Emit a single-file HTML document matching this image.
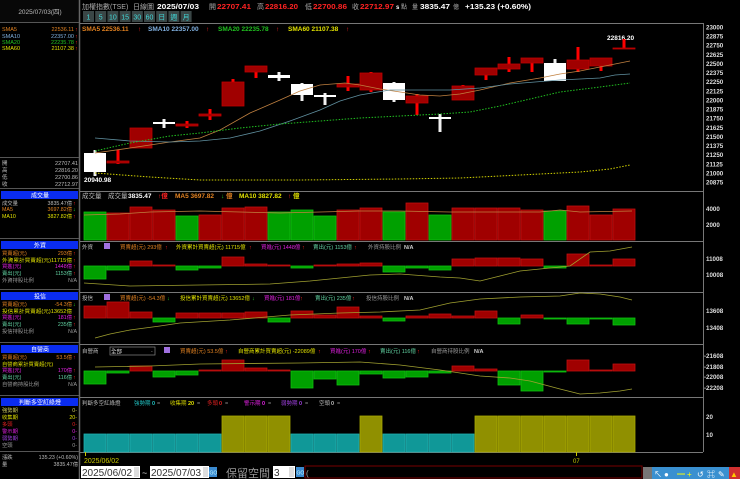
<!DOCTYPE html>
<html><head><meta charset="utf-8">
<style>
html,body{margin:0;padding:0;background:#000;width:740px;height:479px;overflow:hidden}
svg{display:block}
text{font-family:"Liberation Sans","Noto Sans CJK TC",sans-serif}
</style></head><body>
<svg id="s" width="740" height="479" viewBox="0 0 740 479" xmlns="http://www.w3.org/2000/svg">
<rect width="740" height="479" fill="#000"/>
<!-- sidebar -->
<rect x="0" y="0" width="79" height="22" fill="#080808"/>
<text x="40" y="14" font-size="6.5" fill="#bbb" text-anchor="middle">2025/07/03(四)</text>
<line x1="79.5" y1="0" x2="79.5" y2="479" stroke="#666" stroke-width="1.5"/>
<g stroke="#555" stroke-width="1">
<line x1="0" y1="22.5" x2="79" y2="22.5"/><line x1="0" y1="157.5" x2="79" y2="157.5"/>
<line x1="0" y1="188.5" x2="79" y2="188.5"/><line x1="0" y1="238.5" x2="79" y2="238.5"/>
<line x1="0" y1="289.5" x2="79" y2="289.5"/><line x1="0" y1="342.5" x2="79" y2="342.5"/>
<line x1="0" y1="395.5" x2="79" y2="395.5"/><line x1="0" y1="451.5" x2="79" y2="451.5"/>
</g>
<g font-size="5.5">
<text x="2" y="31" fill="#e08020">SMA5</text><text x="74" y="31" fill="#e08020" text-anchor="end">22536.11</text>
<text x="2" y="38" fill="#80b0e0">SMA10</text><text x="74" y="38" fill="#80b0e0" text-anchor="end">22357.00</text>
<text x="2" y="44" fill="#20c020">SMA20</text><text x="74" y="44" fill="#20c020" text-anchor="end">22235.78</text>
<text x="2" y="50" fill="#e0e000">SMA60</text><text x="74" y="50" fill="#e0e000" text-anchor="end">21107.38</text>
<g fill="#ff2020"><text x="75" y="31">↑</text><text x="75" y="38">↑</text><text x="75" y="44">↑</text><text x="75" y="50">↑</text></g>
<g fill="#bbb"><text x="2" y="165">開</text><text x="2" y="172">高</text><text x="2" y="179">低</text><text x="2" y="186">收</text></g>
<g fill="#bbb" text-anchor="end"><text x="78" y="165">22707.41</text><text x="78" y="172">22816.20</text><text x="78" y="179">22700.86</text><text x="78" y="186">22712.97</text></g>
</g>
<g fill="#0a2cf0">
<rect x="1" y="191" width="77" height="8"/><rect x="1" y="241" width="77" height="8"/>
<rect x="1" y="292" width="77" height="8"/><rect x="1" y="345" width="77" height="8"/>
<rect x="1" y="398" width="77" height="8"/>
</g>
<g font-size="6" fill="#fff" text-anchor="middle">
<text x="40" y="197.5">成交量</text><text x="40" y="247.5">外資</text><text x="40" y="298.5">投信</text><text x="40" y="351.5">自營商</text><text x="40" y="404.5">判斷多空紅綠燈</text>
</g>
<g font-size="5.3">
<text x="2" y="205" fill="#bbb">成交量</text><text x="72" y="205" fill="#bbb" text-anchor="end">3835.47億</text><text x="73" y="205" fill="#f22">↑</text>
<text x="2" y="211" fill="#e08020">MA5</text><text x="72" y="211" fill="#e08020" text-anchor="end">3697.82億</text><text x="73" y="211" fill="#2c2">↓</text>
<text x="2" y="218" fill="#e0e000">MA10</text><text x="72" y="218" fill="#e0e000" text-anchor="end">3827.82億</text><text x="73" y="218" fill="#f22">↑</text>

<text x="2" y="255" fill="#e08020">買賣超(元)</text><text x="72" y="255" fill="#e08020" text-anchor="end">293億</text><text x="73" y="255" fill="#f22">↑</text>
<text x="2" y="262" fill="#e0e000" textLength="70" lengthAdjust="spacingAndGlyphs">外資累計買賣超(元)11715億</text><text x="73" y="262" fill="#f22">↑</text>
<text x="2" y="268" fill="#e020e0">買進(元)</text><text x="72" y="268" fill="#e020e0" text-anchor="end">1448億</text><text x="73" y="268" fill="#f22">↑</text>
<text x="2" y="275" fill="#60d0a0">賣出(元)</text><text x="72" y="275" fill="#60d0a0" text-anchor="end">1153億</text><text x="73" y="275" fill="#f22">↑</text>
<text x="2" y="282" fill="#999">外資持股比例</text><text x="77" y="282" fill="#999" text-anchor="end">N/A</text>

<text x="2" y="306" fill="#e08020">買賣超(元)</text><text x="72" y="306" fill="#e08020" text-anchor="end">-54.3億</text><text x="73" y="306" fill="#2c2">↓</text>
<text x="2" y="313" fill="#e0e000" textLength="70" lengthAdjust="spacingAndGlyphs">投信累計買賣超(元)13652億</text>
<text x="2" y="319" fill="#e020e0">買進(元)</text><text x="72" y="319" fill="#e020e0" text-anchor="end">181億</text><text x="73" y="319" fill="#f22">↑</text>
<text x="2" y="326" fill="#60d0a0">賣出(元)</text><text x="72" y="326" fill="#60d0a0" text-anchor="end">235億</text><text x="73" y="326" fill="#f22">↑</text>
<text x="2" y="333" fill="#999">投信持股比例</text><text x="77" y="333" fill="#999" text-anchor="end">N/A</text>

<text x="2" y="359" fill="#e08020">買賣超(元)</text><text x="72" y="359" fill="#e08020" text-anchor="end">53.5億</text><text x="73" y="359" fill="#f22">↑</text>
<text x="2" y="366" fill="#e0e000">自營商累計買賣超(元)</text>
<text x="2" y="372" fill="#e020e0">買進(元)</text><text x="72" y="372" fill="#e020e0" text-anchor="end">170億</text><text x="73" y="372" fill="#f22">↑</text>
<text x="2" y="379" fill="#60d0a0">賣出(元)</text><text x="72" y="379" fill="#60d0a0" text-anchor="end">116億</text><text x="73" y="379" fill="#f22">↑</text>
<text x="2" y="386" fill="#999">自營商持股比例</text><text x="77" y="386" fill="#999" text-anchor="end">N/A</text>

<text x="2" y="412" fill="#d0d060">強勢期</text><text x="77" y="412" fill="#d0d060" text-anchor="end">0-</text>
<text x="2" y="419" fill="#e0e000">收集期</text><text x="77" y="419" fill="#e0e000" text-anchor="end">20-</text>
<text x="2" y="426" fill="#e02020">多頭</text><text x="77" y="426" fill="#e02020" text-anchor="end">0-</text>
<text x="2" y="433" fill="#e020e0">警示期</text><text x="77" y="433" fill="#e020e0" text-anchor="end">0-</text>
<text x="2" y="440" fill="#a040e0">弱勢期</text><text x="77" y="440" fill="#a040e0" text-anchor="end">0-</text>
<text x="2" y="447" fill="#999">空頭</text><text x="77" y="447" fill="#999" text-anchor="end">0-</text>

<text x="2" y="459" fill="#bbb">漲跌</text><text x="78" y="459" fill="#bbb" text-anchor="end">135.23 (+0.60%)</text>
<text x="2" y="466" fill="#bbb">量</text><text x="78" y="466" fill="#bbb" text-anchor="end">3835.47億</text>
</g>

<!-- header -->
<g font-size="7.5" font-weight="bold">
<text x="82" y="9" fill="#aaa" font-weight="normal" font-size="7">加權指數(TSE)</text>
<text x="133" y="9" fill="#aaa" font-weight="normal" font-size="7">日線圖</text>
<text x="157" y="9" fill="#fff" textLength="42" lengthAdjust="spacingAndGlyphs">2025/07/03</text>
<text x="209" y="9" fill="#aaa" font-weight="normal" font-size="7">開</text><text x="217" y="9" fill="#f22" textLength="34" lengthAdjust="spacingAndGlyphs">22707.41</text>
<text x="257" y="9" fill="#aaa" font-weight="normal" font-size="7">高</text><text x="265" y="9" fill="#f22" textLength="33" lengthAdjust="spacingAndGlyphs">22816.20</text>
<text x="305" y="9" fill="#aaa" font-weight="normal" font-size="7">低</text><text x="313" y="9" fill="#f22" textLength="34" lengthAdjust="spacingAndGlyphs">22700.86</text>
<text x="352" y="9" fill="#aaa" font-weight="normal" font-size="7">收</text><text x="360" y="9" fill="#f22" textLength="34" lengthAdjust="spacingAndGlyphs">22712.97</text>
<text x="396" y="9" fill="#fff" font-size="6">s</text><text x="401" y="9" fill="#aaa" font-weight="normal" font-size="6">點</text>
<text x="412" y="9" fill="#aaa" font-weight="normal" font-size="6">量</text><text x="420" y="9" fill="#fff" textLength="30" lengthAdjust="spacingAndGlyphs">3835.47</text><text x="453" y="9" fill="#aaa" font-weight="normal" font-size="6">億</text>
<text x="465" y="9" fill="#fff" textLength="66" lengthAdjust="spacingAndGlyphs">+135.23 (+0.60%)</text>
</g>
<g id="btns"></g>
<!-- panel frames -->
<g stroke="#777" stroke-width="1" fill="none">
<line x1="80" y1="23.5" x2="703" y2="23.5"/>
<line x1="703.5" y1="23" x2="703.5" y2="452"/>
<line x1="80" y1="191.5" x2="703" y2="191.5"/>
<line x1="80" y1="241.5" x2="703" y2="241.5"/>
<line x1="80" y1="292.5" x2="703" y2="292.5"/>
<line x1="80" y1="344.5" x2="703" y2="344.5"/>
<line x1="80" y1="397.5" x2="703" y2="397.5"/>
<line x1="80" y1="452.5" x2="703" y2="452.5"/>
</g>
<g id="yax" font-size="6.2" font-weight="bold" fill="#ddd">
<text x="706" y="211">4000</text><text x="706" y="227">2000</text>
<text x="706" y="261">11008</text><text x="706" y="277">10008</text>
<text x="706" y="313">13608</text><text x="706" y="330">13408</text>
<text x="704" y="358">-21608</text><text x="704" y="369">-21808</text><text x="704" y="379">-22008</text><text x="704" y="390">-22208</text>
<text x="706" y="419">20</text><text x="706" y="437">10</text>
</g>
<!-- titles -->
<g font-size="6.5" font-weight="bold">
<text x="82" y="31" fill="#e08020">SMA5 22536.11</text><text x="138" y="31" fill="#f22">↑</text>
<text x="148" y="31" fill="#80b0e0">SMA10 22357.00</text><text x="206" y="31" fill="#f22">↑</text>
<text x="218" y="31" fill="#20c020">SMA20 22235.78</text><text x="276" y="31" fill="#f22">↑</text>
<text x="288" y="31" fill="#e0e000">SMA60 21107.38</text><text x="346" y="31" fill="#f22">↑</text>
<text x="607" y="40" fill="#fff">22816.20</text>
<text x="84" y="182" fill="#fff">20940.98</text>
<text x="82" y="198" fill="#bbb" font-weight="normal">成交量</text><text x="108" y="198" fill="#bbb" font-weight="normal">成交量</text><text x="128" y="198" fill="#fff">3835.47</text><text x="158" y="198" fill="#f22">↑億</text>
<text x="175" y="198" fill="#e08020">MA5 3697.82</text><text x="221" y="198" fill="#2c2">↓</text><text x="226" y="198" fill="#e08020">億</text>
<text x="239" y="198" fill="#e0e000">MA10 3827.82</text><text x="288" y="198" fill="#f22">↑</text><text x="293" y="198" fill="#e0e000">億</text>
</g>
<g font-size="5.5">
<text x="82" y="249" fill="#bbb">外資</text><rect x="104" y="243" width="6" height="6" fill="#a070e0"/>
<text x="120" y="249" fill="#e08020">買賣超(元) 293億</text><text x="165" y="249" fill="#f22">↑</text>
<text x="176" y="249" fill="#e0e000">外資累計買賣超(元) 11715億</text><text x="249" y="249" fill="#f22">↑</text>
<text x="261" y="249" fill="#e020e0">買進(元) 1448億</text><text x="302" y="249" fill="#f22">↑</text>
<text x="313" y="249" fill="#60d0a0">賣出(元) 1153億</text><text x="354" y="249" fill="#f22">↑</text>
<text x="368" y="249" fill="#999">外資持股比例</text><text x="404" y="249" fill="#ccc" font-weight="bold">N/A</text>

<text x="82" y="300" fill="#bbb">投信</text><rect x="104" y="294" width="6" height="6" fill="#a070e0"/>
<text x="120" y="300" fill="#e08020">買賣超(元) -54.3億</text><text x="167" y="300" fill="#2c2">↓</text>
<text x="180" y="300" fill="#e0e000">投信累計買賣超(元) 13652億</text><text x="252" y="300" fill="#2c2">↓</text>
<text x="264" y="300" fill="#e020e0">買進(元) 181億</text><text x="300" y="300" fill="#f22">↑</text>
<text x="315" y="300" fill="#60d0a0">賣出(元) 235億</text><text x="352" y="300" fill="#f22">↑</text>
<text x="366" y="300" fill="#999">投信持股比例</text><text x="404" y="300" fill="#ccc" font-weight="bold">N/A</text>

<text x="82" y="353" fill="#bbb">自營商</text>
<rect x="110" y="347" width="45" height="8" fill="#000" stroke="#888" stroke-width="0.7"/><text x="111" y="353.5" fill="#ddd">全部</text><text x="151" y="353" fill="#aaa" font-size="5">-</text>
<rect x="164" y="347" width="6" height="6" fill="#a070e0"/>
<text x="180" y="353" fill="#e08020">買賣超(元) 53.5億</text><text x="225" y="353" fill="#f22">↑</text>
<text x="238" y="353" fill="#e0e000">自營商累計買賣超(元) -22089億</text><text x="318" y="353" fill="#f22">↑</text>
<text x="330" y="353" fill="#e020e0">買進(元) 170億</text><text x="368" y="353" fill="#f22">↑</text>
<text x="380" y="353" fill="#60d0a0">賣出(元) 116億</text><text x="417" y="353" fill="#f22">↑</text>
<text x="431" y="353" fill="#999">自營商持股比例</text><text x="474" y="353" fill="#ccc" font-weight="bold">N/A</text>

<text x="82" y="405" fill="#bbb">判斷多空紅綠燈</text>
<text x="134" y="405" fill="#20c0c0">強勢期</text><text x="152" y="405" fill="#20c0c0" font-weight="bold">0</text><text x="157" y="405" fill="#888">=</text>
<text x="170" y="405" fill="#d0d000">收集期</text><text x="188" y="405" fill="#e0e000" font-weight="bold">20</text><text x="197" y="405" fill="#888">=</text>
<text x="207" y="405" fill="#e02020">多頭</text><text x="219" y="405" fill="#e02020" font-weight="bold">0</text><text x="225" y="405" fill="#888">=</text>
<text x="244" y="405" fill="#e020e0">警示期</text><text x="262" y="405" fill="#e020e0" font-weight="bold">0</text><text x="268" y="405" fill="#888">=</text>
<text x="281" y="405" fill="#a040e0">弱勢期</text><text x="299" y="405" fill="#a040e0" font-weight="bold">0</text><text x="305" y="405" fill="#888">=</text>
<text x="319" y="405" fill="#bbb">空頭</text><text x="331" y="405" fill="#bbb" font-weight="bold">0</text><text x="337" y="405" fill="#888">=</text>
</g>
<g id="bars"></g>
<!-- MA lines main -->
<polyline fill="none" stroke="#c08040" stroke-width="0.8" points="95,153 130,148 170,142 200,138 220,130 250,113 280,100 300,91 320,85 345,83 360,85 380,89 420,95 440,96 460,94 480,90 510,83 540,78 560,74 580,71 600,67 630,61"/>
<polyline fill="none" stroke="#6090a0" stroke-width="0.8" points="95,138 130,141 170,142 200,141 230,138 260,131 290,121 320,110 340,101 360,95 390,90 420,90 450,90 480,88 510,84 560,80 600,78 615,75 630,74"/>
<polyline fill="none" stroke="#20c020" stroke-width="1" stroke-dasharray="1.5,1.5" points="95,151 130,143 170,136 200,133 240,128 280,124 320,121 360,118 400,116 440,114 470,112 500,106 530,99 560,92 600,87 630,83"/>
<polyline fill="none" stroke="#d0d000" stroke-width="1" stroke-dasharray="1.5,1.5" points="95,173 150,177 200,180 300,180 400,179 460,178 500,176 540,174 580,172 610,169 630,165"/>
<!-- lines other panels -->
<polyline fill="none" stroke="#a0a030" stroke-width="0.8" points="84,283 130,286 200,285 270,284 310,281 340,278 370,275 400,274 440,277 460,278 480,281 500,276 520,271 550,268 570,266 590,252 610,251 632,247"/>
<polyline fill="none" stroke="#a0a030" stroke-width="0.8" points="95,338 110,334 130,330 160,326 180,323 230,320 290,315 340,313 380,312 420,310 450,303 480,299 520,297 560,296 580,293 600,294 620,297 632,300"/>
<polyline fill="none" stroke="#a0a030" stroke-width="0.8" points="95,367 150,366 200,364 300,363 360,362 400,365 440,370 480,376 510,378 530,381 560,389 580,394 600,393 620,391 632,389"/>
<polyline fill="none" stroke="#c08040" stroke-width="0.8" points="84,215 120,214 150,212 200,211 240,212 280,213 320,212 360,211 400,211 450,212 500,212 540,212 560,210 580,212 632,211"/>
<!-- date axis -->
<line x1="85.5" y1="452" x2="85.5" y2="456" stroke="#cc0"/>
<text x="84" y="463" font-size="7" fill="#cc0">2025/06/02</text>
<line x1="576.5" y1="452" x2="576.5" y2="456" stroke="#cc0"/>
<text x="573" y="463" font-size="6" fill="#cc0">07</text>
<!-- bottom inputs -->
<rect x="80" y="465" width="660" height="14" fill="#000"/>
<rect x="81" y="466" width="59" height="12" fill="#fff"/><text x="82" y="476" font-size="10" fill="#333">2025/06/02</text>
<rect x="134" y="467" width="5" height="10" fill="#ddd"/>
<text x="142" y="476" font-size="9" fill="#ccc">~</text>
<rect x="150" y="466" width="59" height="12" fill="#fff"/><text x="151" y="476" font-size="10" fill="#333">2025/07/03</text>
<rect x="203" y="467" width="5" height="10" fill="#ddd"/>
<rect x="209" y="467" width="8" height="10" fill="#3a8ad0"/><text x="209.5" y="474.5" font-size="5" fill="#cff">GO</text>
<text x="226" y="477" font-size="11" fill="#999">保留空間</text>
<rect x="273" y="466" width="22" height="12" fill="#fff"/><text x="274" y="476" font-size="10" fill="#333">3</text>
<rect x="289" y="467" width="5" height="10" fill="#ddd"/>
<rect x="296" y="467" width="8" height="10" fill="#3a8ad0"/><text x="296.5" y="474.5" font-size="5" fill="#cff">GO</text>
<rect x="305" y="466" width="337" height="12" fill="#000" stroke="#700" stroke-width="1"/>
<text x="306" y="476" font-size="8" fill="#aaa">(</text>
<rect x="643" y="467" width="9" height="12" fill="#777"/>
<rect x="652" y="467" width="88" height="12" fill="#3a90d0"/>
<rect x="729" y="467" width="11" height="12" fill="#d03030"/>
<g font-size="8" fill="#fff"><text x="654" y="477">↖</text><text x="664" y="477">●</text><text x="677" y="477" fill="#ff0">━</text><text x="687" y="477" fill="#ff0">+</text><text x="697" y="477">↺</text><text x="707" y="477">⌘</text><text x="718" y="477">✎</text><text x="730" y="477" fill="#fc0">▲</text></g>
</svg>
<script>
var NS="http://www.w3.org/2000/svg";
function R(g,x,y,w,h,f,s){var r=document.createElementNS(NS,"rect");r.setAttribute("x",x);r.setAttribute("y",y);r.setAttribute("width",w);r.setAttribute("height",Math.max(h,1));r.setAttribute("fill",f);if(s){r.setAttribute("stroke",s);r.setAttribute("stroke-width","0.8");}g.appendChild(r);}
function T(g,x,y,t,f,sz,a){var e=document.createElementNS(NS,"text");e.setAttribute("x",x);e.setAttribute("y",y);e.setAttribute("font-size",sz);e.setAttribute("fill",f);if(a)e.setAttribute("text-anchor",a);e.textContent=t;g.appendChild(e);return e;}
var b=document.getElementById("btns");
var L=["1","5","10","15","30","60","日","週","月"];
for(var i=0;i<L.length;i++){var bx=83+i*12.2;R(b,bx,11,11,11,"#3a4646");T(b,bx+5.5,19.5,L[i],"#40d8d8",7,"middle");}
var ya=document.getElementById("yax");
for(var k=0;k<=17;k++){T(ya,706,27+k*9.12+2.5,String(23000-125*k),"#ddd",6.2);}
var g=document.getElementById("bars");
function X(i){return 84+23*i;}
var C=[["w",153,172,150,176],["r",161,163,150,164],["r",128,148,128,148],["w",122,124,119,128],["r",124,126,121,128],["r",114,116,109,120],["r",82,106,79,106],["r",66,72,66,78],["w",75,78,72,81],["w",84,95,83,101],["w",95,97,93,105],["r",84,87,76,91],["r",73,90,72,92],["w",83,100,82,102],["r",96,103,94,115],["w",117,119,114,132],["r",86,100,85,100],["r",68,75,68,80],["r",64,69,57,72],["r",58,63,58,72],["w",63,81,59,81],["r",60,69,47,72],["r",58,66,58,71],["r",48,49,39,49]];
for(var i=0;i<C.length;i++){var c=C[i],x=X(i);
 if(c[0]=="r"){R(g,x+9.5,c[3],3,c[4]-c[3],"#ff0000");R(g,x,c[1],22,c[2]-c[1],"#a00000","#c00000");}
 else{R(g,x+9.5,c[3],3,c[4]-c[3],"#f0f0f0");R(g,x,c[1],22,c[2]-c[1],"#ffffff");}}
var V=[212,213,207,210,216,215,208,207,212,210,216,210,208,212,203,215,208,208,208,210,211,206,215,209];
var VC="grrrgrrrgggrrgrgrrrrgrrr";
for(var i=0;i<24;i++){var col=VC[i]=="g"?"#00a000":"#a00000",st=VC[i]=="g"?"#10c010":"#c01010";R(g,X(i),V[i],22,240-V[i],col,st);}
function P(arr,zero){for(var i=0;i<arr.length;i++){var v=arr[i];if(v<0)R(g,X(i),zero+v,22,-v,"#a00000","#c01010");else R(g,X(i),zero,22,v,"#00a000","#10c010");}}
P([13,4,-5,-1,4,2,-9,-2,-1,2,-1,-2,-3,6,2,4,-7,-8,-8,-7,2,-12,-1,-7],266);
P([-12,-16,-6,4,-5,-5,-5,-6,4,-7,-3,-11,-2,3,-2,-4,-2,-7,6,-3,1,6,1,7],318);
P([13,2,-5,6,4,-1,-11,-3,-1,17,8,14,3,7,6,2,-5,-2,14,20,1,-11,-1,-7],371);
var J="cccccc"+"ooo"+"ccc"+"o"+"cccc"+"ooooooo";
for(var i=0;i<24;i++){if(J[i]=="c")R(g,X(i),434,22,18,"#109898","#20b0b0");else R(g,X(i),416,22,36,"#909000","#a8a800");}
</script>
</body></html>
